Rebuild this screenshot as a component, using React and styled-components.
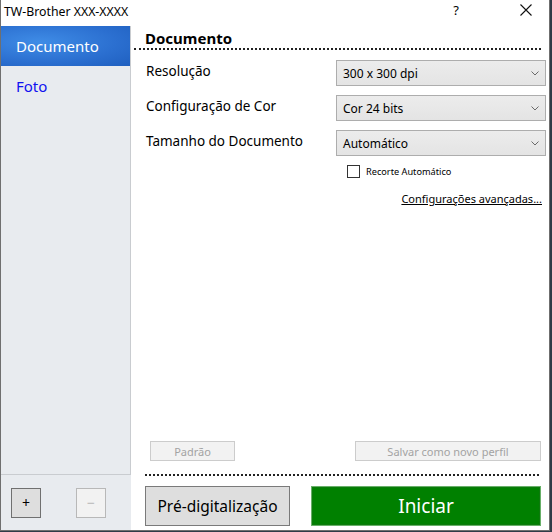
import React from "react"
import styled, { createGlobalStyle } from "styled-components"

const GlobalStyle = createGlobalStyle`
  html, body {
    margin: 0;
    padding: 0;
    background: #2f3b47;
  }
  body {
    font-family: "Noto Sans", "Open Sans", sans-serif;
    color: #000;
  }
`

const Window = styled.div`
  box-sizing: border-box;
  width: 550px;
  height: 531px;
  border: 1px solid #6f6f6f;
  border-top: none;
  background: #fff;
  display: flex;
  flex-direction: column;
`

const TitleBar = styled.div`
  height: 26px;
  display: flex;
  align-items: center;
  padding-left: 3px;
  font-size: 12.3px;
  flex-shrink: 0;
`

const Title = styled.div`
  flex: 1;
  margin-top: -4px;
`

const TitleButton = styled.div`
  width: ${p => p.$w || 46}px;
  height: 26px;
  display: flex;
  align-items: center;
  justify-content: center;
  font-size: 13px;
  margin-top: -6px;
`

const Body = styled.div`
  flex: 1;
  display: flex;
  min-height: 0;
`

const Sidebar = styled.div`
  width: 130px;
  display: flex;
  flex-direction: column;
  background: #e8ebef;
`

const NavList = styled.div`
  flex: 1;
  border-right: 1px solid #c9ccd0;
  border-bottom: 1px solid #c9ccd0;
`

const NavItem = styled.div`
  height: 40px;
  display: flex;
  align-items: center;
  padding-left: 15px;
  font-size: 15px;
  color: ${p => (p.$active ? "#fff" : "#1010f0")};
  background: ${p =>
    p.$active
      ? "radial-gradient(ellipse at 30% 40%, #3f8ce6 0%, #2b6fd0 60%, #1f5fbf 100%)"
      : "transparent"};
`

const SideFooter = styled.div`
  height: 55px;
  display: flex;
  align-items: center;
  gap: 35px;
  padding-left: 10px;
`

const SquareButton = styled.div`
  box-sizing: border-box;
  width: 30px;
  height: 30px;
  display: flex;
  align-items: center;
  justify-content: center;
  border: 1px solid ${p => (p.$disabled ? "#b8b8b8" : "#707070")};
  background: ${p => (p.$disabled ? "#f2f2f2" : "#dedede")};
  color: ${p => (p.$disabled ? "#b8b8b8" : "#000")};
  font-size: 14px;
`

const Main = styled.div`
  flex: 1;
  display: flex;
  flex-direction: column;
  padding: 0 3px 4px 3px;
`

const Heading = styled.div`
  font-size: 15px;
  font-weight: bold;
  padding: 3px 0 0 11px;
  line-height: 18px;
  border-bottom: 2px dotted #222;
  margin-right: 5px;
  padding-bottom: 1px;
`

const Rows = styled.div`
  display: flex;
  flex-direction: column;
  gap: 9px;
  padding: 10px 0 0 12px;
`

const Row = styled.div`
  display: flex;
  align-items: center;
  justify-content: space-between;
`

const Label = styled.div`
  font-size: 13.5px;
  margin-top: -4px;
`

const Select = styled.div`
  box-sizing: border-box;
  width: 210px;
  height: 26px;
  border: 1px solid #adadad;
  background: linear-gradient(#ececec, #e4e4e4);
  display: flex;
  align-items: center;
  justify-content: space-between;
  padding: 0 6px 0 6px;
  font-size: 12px;
`

const Options = styled.div`
  display: flex;
  flex-direction: column;
  align-items: flex-end;
  padding-right: 4px;
`

const CheckRow = styled.label`
  display: flex;
  align-items: center;
  gap: 6px;
  font-size: 9.2px;
  width: 195px;
  margin-top: 9px;
`

const Box = styled.span`
  box-sizing: border-box;
  width: 13px;
  height: 13px;
  border: 1px solid #333;
  background: #fff;
`

const AdvancedLink = styled.a`
  font-size: 11px;
  color: #000;
  text-decoration: underline;
  margin-top: 13px;
`

const Spacer = styled.div`
  flex: 1;
`

const ProfileBar = styled.div`
  display: flex;
  justify-content: space-between;
  padding: 0 5px 0 16px;
`

const GhostButton = styled.div`
  box-sizing: border-box;
  width: ${p => p.$w}px;
  height: 20px;
  border: 1px solid #cccccc;
  background: #f2f2f2;
  color: #a3a3a3;
  font-size: 11px;
  display: flex;
  align-items: center;
  justify-content: center;
`

const Divider = styled.div`
  border-bottom: 2px dotted #222;
  margin: 13px 7px 10px 11px;
`

const ActionBar = styled.div`
  display: flex;
  gap: 21px;
  padding: 0 5px 0 11px;
`

const PreButton = styled.div`
  box-sizing: border-box;
  width: 145px;
  height: 40px;
  border: 1px solid #7a7a7a;
  background: #dedede;
  font-size: 15.5px;
  display: flex;
  align-items: center;
  justify-content: center;
`

const StartButton = styled.div`
  box-sizing: border-box;
  flex: 1;
  height: 40px;
  border: 1px solid #68b068;
  box-shadow: inset 0 0 0 1px #0c7a0c;
  background: #008000;
  color: #fff;
  font-size: 19px;
  display: flex;
  align-items: center;
  justify-content: center;
`

const Chevron = () => (
  <svg width="8" height="5" viewBox="0 0 8 5">
    <path d="M0.5 0.5 L4 4 L7.5 0.5" fill="none" stroke="#6a6a6a" strokeWidth="1" />
  </svg>
)

const CloseIcon = () => (
  <svg width="12" height="12" viewBox="0 0 12 12">
    <path d="M0.5 0.5 L11.5 11.5 M11.5 0.5 L0.5 11.5" stroke="#111" strokeWidth="1.1" />
  </svg>
)

const settings = [
  { label: "Resolução", value: "300 x 300 dpi" },
  { label: "Configuração de Cor", value: "Cor 24 bits" },
  { label: "Tamanho do Documento", value: "Automático" },
]

export default function App() {
  return (
    <>
      <GlobalStyle />
      <Window>
        <TitleBar>
          <Title>TW-Brother XXX-XXXX</Title>
          <TitleButton $w={46}>?</TitleButton>
          <TitleButton $w={24} />
          <TitleButton $w={46}>
            <CloseIcon />
          </TitleButton>
        </TitleBar>
        <Body>
          <Sidebar>
            <NavList>
              <NavItem $active>Documento</NavItem>
              <NavItem>Foto</NavItem>
            </NavList>
            <SideFooter>
              <SquareButton>+</SquareButton>
              <SquareButton $disabled>−</SquareButton>
            </SideFooter>
          </Sidebar>
          <Main>
            <Heading>Documento</Heading>
            <Rows>
              {settings.map(s => (
                <Row key={s.label}>
                  <Label>{s.label}</Label>
                  <Select>
                    <span>{s.value}</span>
                    <Chevron />
                  </Select>
                </Row>
              ))}
            </Rows>
            <Options>
              <CheckRow>
                <Box />
                Recorte Automático
              </CheckRow>
              <AdvancedLink>Configurações avançadas...</AdvancedLink>
            </Options>
            <Spacer />
            <ProfileBar>
              <GhostButton $w={85}>Padrão</GhostButton>
              <GhostButton $w={186}>Salvar como novo perfil</GhostButton>
            </ProfileBar>
            <Divider />
            <ActionBar>
              <PreButton>Pré-digitalização</PreButton>
              <StartButton>Iniciar</StartButton>
            </ActionBar>
          </Main>
        </Body>
      </Window>
    </>
  )
}
